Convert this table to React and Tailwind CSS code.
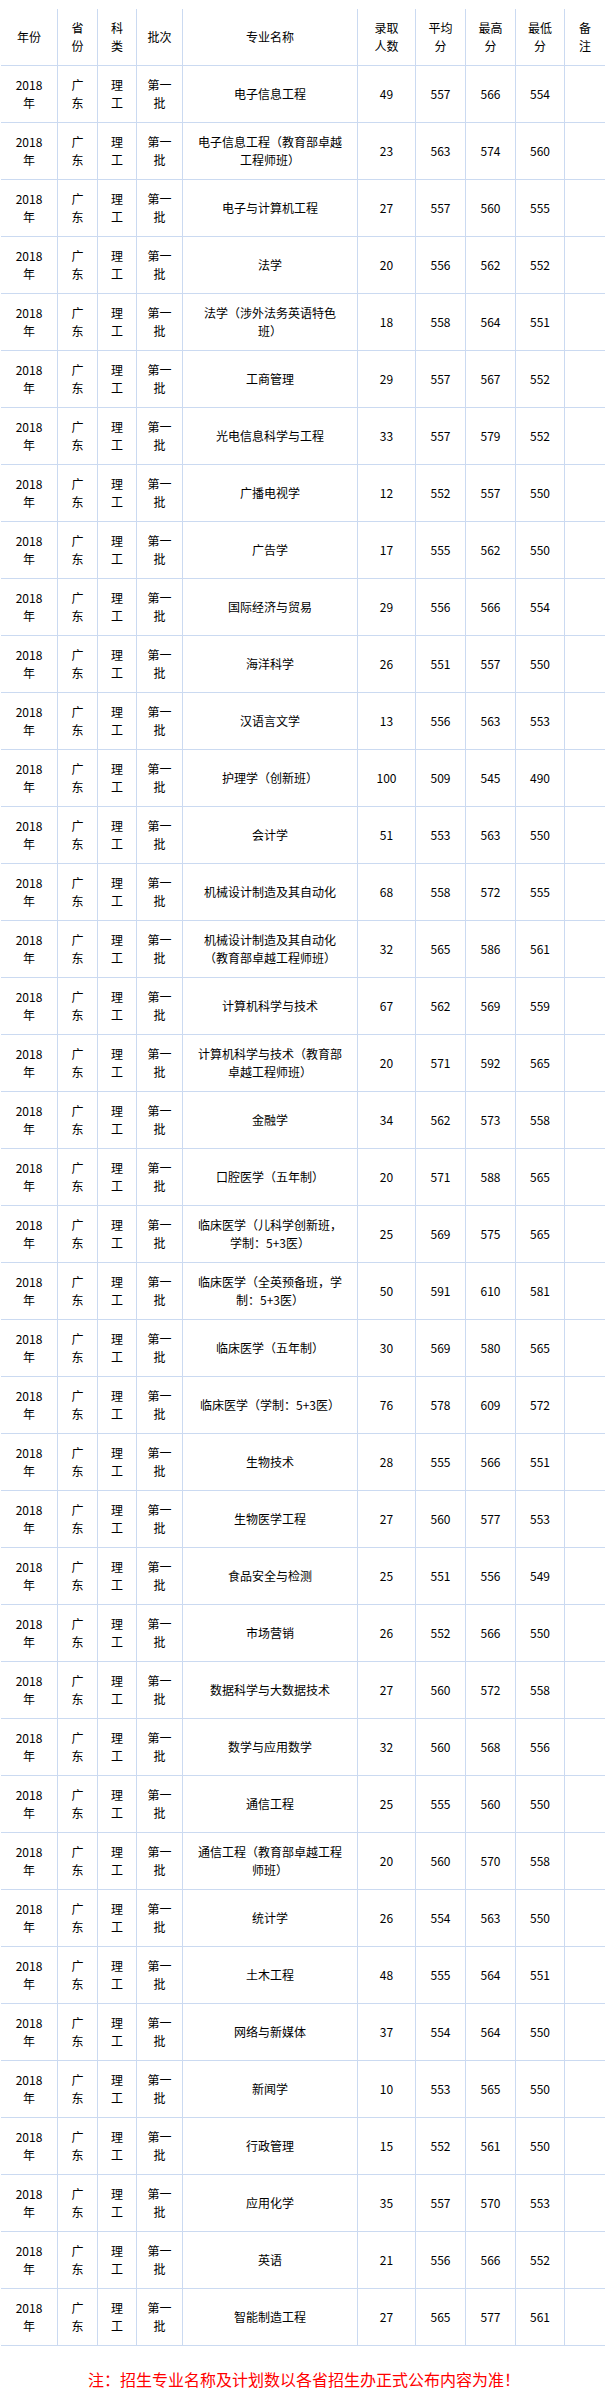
import React from "react";

const rows = [
  ["电子信息工程", 49, 557, 566, 554],
  ["电子信息工程（教育部卓越工程师班）", 23, 563, 574, 560],
  ["电子与计算机工程", 27, 557, 560, 555],
  ["法学", 20, 556, 562, 552],
  ["法学（涉外法务英语特色班）", 18, 558, 564, 551],
  ["工商管理", 29, 557, 567, 552],
  ["光电信息科学与工程", 33, 557, 579, 552],
  ["广播电视学", 12, 552, 557, 550],
  ["广告学", 17, 555, 562, 550],
  ["国际经济与贸易", 29, 556, 566, 554],
  ["海洋科学", 26, 551, 557, 550],
  ["汉语言文学", 13, 556, 563, 553],
  ["护理学（创新班）", 100, 509, 545, 490],
  ["会计学", 51, 553, 563, 550],
  ["机械设计制造及其自动化", 68, 558, 572, 555],
  ["机械设计制造及其自动化（教育部卓越工程师班）", 32, 565, 586, 561],
  ["计算机科学与技术", 67, 562, 569, 559],
  ["计算机科学与技术（教育部卓越工程师班）", 20, 571, 592, 565],
  ["金融学", 34, 562, 573, 558],
  ["口腔医学（五年制）", 20, 571, 588, 565],
  ["临床医学（儿科学创新班，学制：5+3医）", 25, 569, 575, 565],
  ["临床医学（全英预备班，学制：5+3医）", 50, 591, 610, 581],
  ["临床医学（五年制）", 30, 569, 580, 565],
  ["临床医学（学制：5+3医）", 76, 578, 609, 572],
  ["生物技术", 28, 555, 566, 551],
  ["生物医学工程", 27, 560, 577, 553],
  ["食品安全与检测", 25, 551, 556, 549],
  ["市场营销", 26, 552, 566, 550],
  ["数据科学与大数据技术", 27, 560, 572, 558],
  ["数学与应用数学", 32, 560, 568, 556],
  ["通信工程", 25, 555, 560, 550],
  ["通信工程（教育部卓越工程师班）", 20, 560, 570, 558],
  ["统计学", 26, 554, 563, 550],
  ["土木工程", 48, 555, 564, 551],
  ["网络与新媒体", 37, 554, 564, 550],
  ["新闻学", 10, 553, 565, 550],
  ["行政管理", 15, 552, 561, 550],
  ["应用化学", 35, 557, 570, 553],
  ["英语", 21, 556, 566, 552],
  ["智能制造工程", 27, 565, 577, 561],
];

const grid =
  "grid grid-cols-[57px_40px_39px_46px_175px_58px_50px_50px_49px_40px]";
const cell =
  "h-[57px] flex items-center justify-center text-center border-b border-r border-[#cbdaf1]";
const last = "h-[57px] flex items-center justify-center text-center border-b border-[#cbdaf1]";

const Cell = ({ children, className = "" }) => (
  <div className={`${cell} ${className}`}>
    <span>{children}</span>
  </div>
);

const App = () => {
  return (
    <div className="w-[608px] bg-white text-black text-[12px] leading-[18px] font-['Noto_Sans_CJK_SC','Noto_Sans',sans-serif]">
      <div className="pt-[9px] pl-px">
        {/* header */}
        <div className={grid}>
          <Cell>年份</Cell>
          <Cell className="px-[12px]">省份</Cell>
          <Cell className="px-[12px]">科类</Cell>
          <Cell>批次</Cell>
          <Cell>专业名称</Cell>
          <Cell className="px-[16px]">录取人数</Cell>
          <Cell className="px-[12px]">平均分</Cell>
          <Cell className="px-[12px]">最高分</Cell>
          <Cell className="px-[12px]">最低分</Cell>
          <div className={`${last} px-[10px]`}>
            <span>备注</span>
          </div>
        </div>

        {rows.map((r, i) => (
          <div key={i} className={grid}>
            <Cell className="px-[14px]">2018年</Cell>
            <Cell className="px-[12px]">广东</Cell>
            <Cell className="px-[8px]">理工</Cell>
            <Cell className="px-[10px]">第一批</Cell>
            <Cell className="px-[12px]">{r[0]}</Cell>
            <Cell>{r[1]}</Cell>
            <Cell>{r[2]}</Cell>
            <Cell>{r[3]}</Cell>
            <Cell>{r[4]}</Cell>
            <div className={last}></div>
          </div>
        ))}
      </div>

      <p className="mt-[21px] text-center text-[16px] leading-[24px] text-[#ff0000]">
        注：招生专业名称及计划数以各省招生办正式公布内容为准！
      </p>
    </div>
  );
};

export default App;
